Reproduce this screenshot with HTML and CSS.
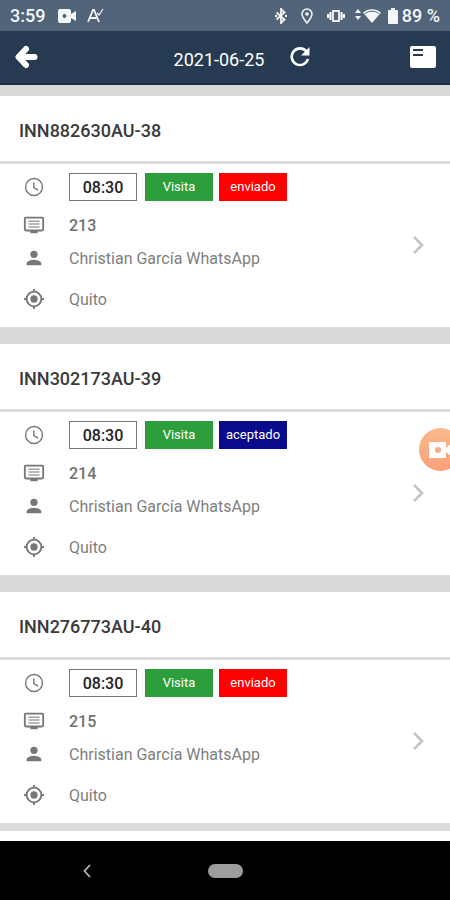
FILE: index.html
```html
<!DOCTYPE html>
<html lang="es">
<head>
<meta charset="utf-8">
<meta name="viewport" content="width=device-width, initial-scale=1">
<title>2021-06-25</title>
<link rel="stylesheet" href="styles.css">
</head>
<body>
<svg class="sprite" aria-hidden="true">
  <symbol id="clock" viewBox="0 0 24 24"><path d="M12 2a10 10 0 1 0 0 20 10 10 0 0 0 0-20zm0 18.500a8.500 8.500 0 1 1 0-17 8.500 8.500 0 0 1 0 17zM12.500 7H11v6l5 3 .8-1.200-4.300-2.600z"/></symbol>
  <symbol id="screen" viewBox="0 0 24 24"><path d="M21 3H3a2 2 0 0 0-2 2v12a2 2 0 0 0 2 2h5v2h8v-2h5a2 2 0 0 0 2-2V5a2 2 0 0 0-2-2zm0 14H3V5h18v12z"/><path opacity=".7" d="M6 7h12v1.600H6zM6 10.200h12v1.600H6zM6 13.400h12V15H6z"/></symbol>
  <symbol id="person" viewBox="0 0 24 24"><path d="M12 12a4 4 0 1 0 0-8 4 4 0 0 0 0 8zm0 2c-2.700 0-8 1.300-8 4v2h16v-2c0-2.700-5.300-4-8-4z"/></symbol>
  <symbol id="target" viewBox="0 0 24 24"><path d="M12 8a4 4 0 1 0 0 8 4 4 0 0 0 0-8zm8.940 3A9 9 0 0 0 13 3.060V1h-2v2.060A9 9 0 0 0 3.060 11H1v2h2.060A9 9 0 0 0 11 20.940V23h2v-2.060A9 9 0 0 0 20.940 13H23v-2h-2.060zM12 19a7 7 0 1 1 0-14 7 7 0 0 1 0 14z"/></symbol>
  <symbol id="chevron" viewBox="0 0 12 20"><path d="M2 2l8 8-8 8" fill="none" stroke="currentColor" stroke-width="2.500"/></symbol>
</svg>

<div class="status">
  <span>3:59</span>
  <svg class="cam" viewBox="0 0 20 16"><path fill="currentColor" fill-rule="evenodd" d="M3 1h9a2 2 0 0 1 2 2v3l5-3v10l-5-3v3a2 2 0 0 1-2 2H3a2 2 0 0 1-2-2V3a2 2 0 0 1 2-2zm4.500 5a2 2 0 1 0 0 4 2 2 0 0 0 0-4z"/></svg>
  <svg class="spell" viewBox="0 0 18 16"><path d="M1 14L6 2h1l5 12M3 10h7" fill="none" stroke="currentColor" stroke-width="1.800"/><path d="M10 5l2 2 4-6" fill="none" stroke="currentColor" stroke-width="1.200"/></svg>
  <div class="status-right">
    <svg class="bt" viewBox="0 0 12 16"><path d="M1.500 4.500l8 7L6 15V1l3.500 3.500-8 7M0 8h2M10 8h2" fill="none" stroke="currentColor" stroke-width="1.800"/></svg>
    <svg class="pin" viewBox="0 0 12 16"><path d="M6 15C3.500 11.500 1 9 1 6a5 5 0 0 1 10 0c0 3-2.500 5.500-5 9z" fill="none" stroke="currentColor" stroke-width="1.500"/><circle cx="6" cy="6" r="1.800" fill="currentColor"/></svg>
    <svg class="vib" viewBox="0 0 18 16"><path d="M6 3h6v10H6z" fill="none" stroke="currentColor" stroke-width="1.800"/><path d="M3.500 4v8M14.500 4v8M1 6v4M17 6v4" stroke="currentColor" stroke-width="2.200"/></svg>
    <svg class="wifi" viewBox="0 0 26 16"><path fill="currentColor" d="M3 1l3 4H0zM3 12l3-4H0zM8 4.500c5-4.500 13-4.500 18 0L17 15z"/><path d="M10 5.500c4-3 10-3 14 0" fill="none" stroke="#52647a" stroke-width="1"/></svg>
    <svg class="bat" viewBox="0 0 10 16"><path fill="currentColor" d="M3 0h4v2h2a1 1 0 0 1 1 1v12a1 1 0 0 1-1 1H1a1 1 0 0 1-1-1V3a1 1 0 0 1 1-1h2z"/></svg>
    <span>89 %</span>
  </div>
</div>

<header class="bar">
  <button class="icon-btn" aria-label="Atrás"><svg class="back" viewBox="0 0 24 24"><path d="M12 4L4.500 12l7.500 8M6 12h14.500" fill="none" stroke="currentColor" stroke-width="6" stroke-linejoin="round" stroke-linecap="round"/></svg></button>
  <div class="date">
    <h1>2021-06-25</h1>
    <button class="icon-btn" aria-label="Actualizar"><svg class="reload" viewBox="0 0 20 20"><path d="M16.500 4.500A8.300 8.300 0 1 0 18 12" fill="none" stroke="currentColor" stroke-width="2.600"/><path fill="currentColor" d="M19.500 0v8.500H11z"/></svg></button>
  </div>
  <button class="icon-btn" aria-label="Detalle"><svg class="panel" viewBox="0 0 26 22"><path fill="currentColor" fill-rule="evenodd" d="M2 0h22a2 2 0 0 1 2 2v18a2 2 0 0 1-2 2H2a2 2 0 0 1-2-2V2a2 2 0 0 1 2-2zm1 3v2h10V3zm0 5v2h10V8z"/></svg></button>
</header>

<main class="list">
  <article class="card">
    <h2>INN882630AU-38</h2>
    <div class="body">
      <div class="rows">
        <div class="row tags"><svg class="ico"><use href="#clock"/></svg><span class="time">08:30</span><span class="tag visit">Visita</span><span class="tag sent">enviado</span></div>
        <div class="row num"><svg class="ico"><use href="#screen"/></svg><strong>213</strong></div>
        <div class="row"><svg class="ico"><use href="#person"/></svg><span>Christian García WhatsApp</span></div>
        <div class="row place"><svg class="ico"><use href="#target"/></svg><span>Quito</span></div>
      </div>
      <a class="go" href="#" aria-label="Abrir INN882630AU-38"><svg><use href="#chevron"/></svg></a>
    </div>
  </article>
  <article class="card">
    <h2>INN302173AU-39</h2>
    <div class="body">
      <div class="rows">
        <div class="row tags"><svg class="ico"><use href="#clock"/></svg><span class="time">08:30</span><span class="tag visit">Visita</span><span class="tag accepted">aceptado</span></div>
        <div class="row num"><svg class="ico"><use href="#screen"/></svg><strong>214</strong></div>
        <div class="row"><svg class="ico"><use href="#person"/></svg><span>Christian García WhatsApp</span></div>
        <div class="row place"><svg class="ico"><use href="#target"/></svg><span>Quito</span></div>
      </div>
      <a class="go" href="#" aria-label="Abrir INN302173AU-39"><svg><use href="#chevron"/></svg></a>
    </div>
  </article>
  <article class="card">
    <h2>INN276773AU-40</h2>
    <div class="body">
      <div class="rows">
        <div class="row tags"><svg class="ico"><use href="#clock"/></svg><span class="time">08:30</span><span class="tag visit">Visita</span><span class="tag sent">enviado</span></div>
        <div class="row num"><svg class="ico"><use href="#screen"/></svg><strong>215</strong></div>
        <div class="row"><svg class="ico"><use href="#person"/></svg><span>Christian García WhatsApp</span></div>
        <div class="row place"><svg class="ico"><use href="#target"/></svg><span>Quito</span></div>
      </div>
      <a class="go" href="#" aria-label="Abrir INN276773AU-40"><svg><use href="#chevron"/></svg></a>
    </div>
  </article>
</main>
<div class="foot"></div>

<nav class="nav">
  <button class="icon-btn" aria-label="Volver"><svg class="nav-back" viewBox="0 0 8 14"><path d="M7 1L1.500 7 7 13" fill="none" stroke="currentColor" stroke-width="1.800"/></svg></button>
  <button class="home" aria-label="Inicio"></button>
</nav>

<button class="bubble" aria-label="Grabar"><svg viewBox="0 0 26 18"><path fill="currentColor" fill-rule="evenodd" d="M1 1h17v6l6-5v14l-6-5v6H1zm9 5a3 3 0 1 0 0 6 3 3 0 0 0 0-6z"/></svg></button>
</body>
</html>
```
FILE: styles.css
```css
* {
  box-sizing: border-box;
}

body {
  margin: 0;
  min-height: 100vh;
  display: flex;
  flex-direction: column;
  overflow-x: hidden;
  background: #dadadb;
  color: #808080;
  font: 16px/20px Roboto, sans-serif;
}

button {
  margin: 0;
  padding: 0;
  border: 0;
  background: none;
  color: inherit;
  font: inherit;
}

svg {
  display: block;
  flex: none;
}

.sprite {
  position: absolute;
  width: 0;
  height: 0;
}

.status {
  display: flex;
  align-items: center;
  height: 31px;
  padding: 0 10px;
  background: #52647a;
  color: #f4f6f8;
  font-size: 18px;
  font-weight: 500;
}

.cam {
  width: 20px;
  height: 16px;
  margin-left: 12px;
}

.spell {
  width: 18px;
  height: 16px;
  margin-left: 10px;
}

.status-right {
  display: flex;
  align-items: center;
  margin-left: auto;
}

.bt,
.pin {
  width: 12px;
  height: 16px;
  margin-right: 14px;
}

.vib {
  width: 18px;
  height: 16px;
  margin-right: 10px;
}

.wifi {
  width: 26px;
  height: 16px;
  margin-right: 7px;
}

.bat {
  width: 10px;
  height: 16px;
  margin-right: 4px;
}

.bar {
  display: grid;
  grid-template-columns: 1fr auto 1fr;
  align-items: center;
  height: 54px;
  padding: 0 14px;
  border-bottom: 2px solid #1a2f49;
  background: #263b52;
  color: #fff;
}

.icon-btn {
  display: flex;
}

.bar > :last-child {
  justify-self: end;
}

.back {
  width: 24px;
  height: 24px;
}

.date {
  display: flex;
  align-items: center;
  gap: 26px;
  padding-left: 34px;
}

.date h1 {
  margin: 0;
  padding-top: 6px;
  font-size: 18px;
  font-weight: 400;
}

.reload {
  width: 20px;
  height: 20px;
}

.panel {
  width: 26px;
  height: 22px;
}

.list {
  display: flex;
  flex-direction: column;
  gap: 17px;
  padding: 11px 0 8px;
}

.card {
  background: #fff;
}

.card h2 {
  margin: 0;
  padding: 25px 19px 20px;
  border-bottom: 3px solid #dcdcdd;
  color: #3a3a3a;
  font-size: 18px;
  font-weight: 500;
}

.body {
  display: flex;
  align-items: center;
  padding: 9px 26px 3px 23px;
}

.rows {
  flex: 1;
}

.row {
  display: flex;
  align-items: center;
  height: 32px;
}

.row > span,
.row strong {
  padding-top: 1px;
}

.ico {
  width: 22px;
  height: 22px;
  margin-right: 24px;
  fill: #777;
}

.tags {
  height: 28px;
  margin-bottom: 7px;
}

.num {
  height: 34px;
}

.place {
  height: 50px;
}

.row strong {
  color: #707070;
  font-weight: 500;
}

.row .time,
.row .tag {
  width: 68px;
  height: 28px;
  padding: 0;
  line-height: 28px;
  text-align: center;
}

.row .time {
  margin-right: 8px;
  border: 1px solid #777;
  color: #222;
  font-weight: 500;
}

.tag {
  color: #fff;
  font-size: 13px;
}

.row .visit {
  margin-right: 6px;
  background: #2c9f3c;
}

.sent {
  background: #fe0000;
}

.accepted {
  background: #090a8c;
}

.go {
  padding-bottom: 8px;
  color: #c4c4c4;
}

.go svg {
  width: 12px;
  height: 20px;
}

.foot {
  flex: 1;
  min-height: 10px;
  background: #fff;
}

.nav {
  display: grid;
  grid-template-columns: 1fr auto 1fr;
  align-items: center;
  height: 59px;
  background: #000;
  color: #b5b5b5;
}

.nav .icon-btn {
  justify-self: center;
  margin-right: 34px;
}

.nav-back {
  width: 8px;
  height: 14px;
}

.home {
  width: 35px;
  height: 14px;
  border-radius: 7px;
  background: #9d9d9d;
}

.bubble {
  position: fixed;
  top: 50%;
  right: -12px;
  width: 43px;
  height: 43px;
  margin-top: -22px;
  padding-left: 9px;
  border-radius: 50%;
  background: linear-gradient(#fbb98a, #fba07c);
  color: #fff;
}

.bubble svg {
  width: 26px;
  height: 18px;
}
```
